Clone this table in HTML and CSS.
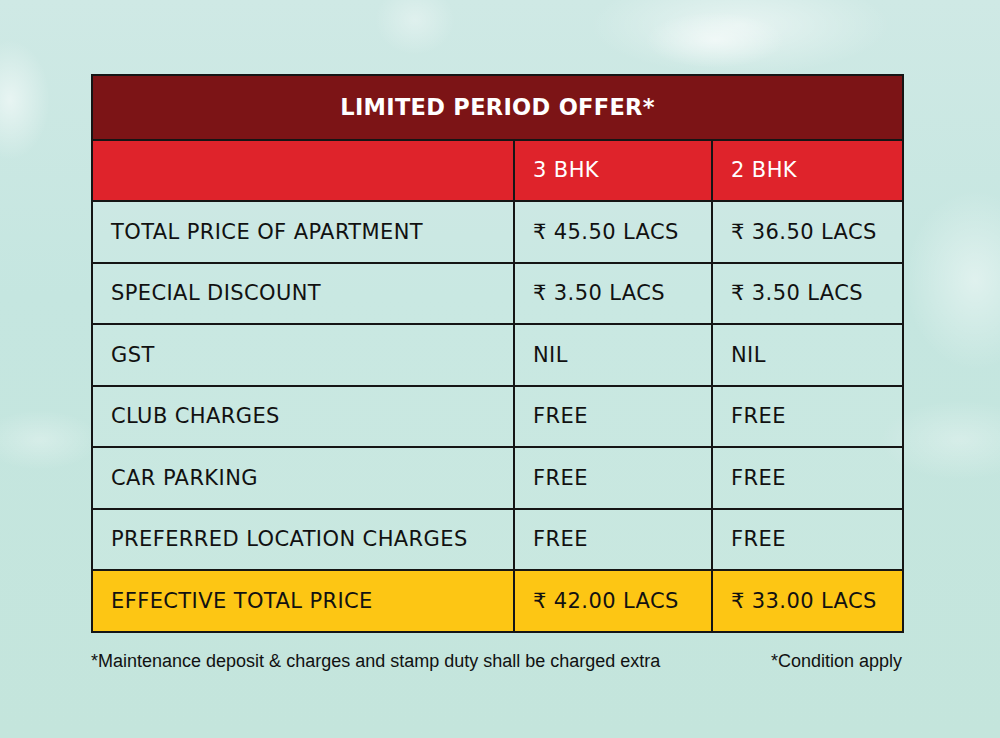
FILE: index.html
```html
<!DOCTYPE html>
<html>
<head>
<meta charset="utf-8">
<link rel="stylesheet" href="styles.css">
</head>
<body>
<div class="page">
  <table class="offer">
    <colgroup>
      <col class="c1"><col class="c2"><col class="c3">
    </colgroup>
    <tr class="title-row"><th colspan="3">LIMITED PERIOD OFFER*</th></tr>
    <tr class="head-row"><td></td><td>3 BHK</td><td>2 BHK</td></tr>
    <tr><td>TOTAL PRICE OF APARTMENT</td><td>₹ 45.50 LACS</td><td>₹ 36.50 LACS</td></tr>
    <tr><td>SPECIAL DISCOUNT</td><td>₹ 3.50 LACS</td><td>₹ 3.50 LACS</td></tr>
    <tr><td>GST</td><td>NIL</td><td>NIL</td></tr>
    <tr><td>CLUB CHARGES</td><td>FREE</td><td>FREE</td></tr>
    <tr><td>CAR PARKING</td><td>FREE</td><td>FREE</td></tr>
    <tr><td>PREFERRED LOCATION CHARGES</td><td>FREE</td><td>FREE</td></tr>
    <tr class="total-row"><td>EFFECTIVE TOTAL PRICE</td><td>₹ 42.00 LACS</td><td>₹ 33.00 LACS</td></tr>
  </table>
  <div class="notes">
    <span>*Maintenance deposit &amp; charges and stamp duty shall be charged extra</span>
    <span>*Condition apply</span>
  </div>
</div>
</body>
</html>
```

FILE: styles.css
```css
html, body {
  margin: 0;
  padding: 0;
}
body {
  width: 1000px;
  height: 738px;
  overflow: hidden;
  font-family: "DejaVu Sans", sans-serif;
  color: #111;
  background:
    radial-gradient(ellipse 70px 28px at 715px 40px, rgba(255,255,255,0.55), rgba(255,255,255,0) 100%),
    radial-gradient(ellipse 150px 50px at 740px 25px, rgba(255,255,255,0.5), rgba(255,255,255,0) 100%),
    radial-gradient(ellipse 40px 35px at 415px 20px, rgba(255,255,255,0.35), rgba(255,255,255,0) 100%),
    radial-gradient(ellipse 40px 60px at 10px 100px, rgba(255,255,255,0.55), rgba(255,255,255,0) 100%),
    radial-gradient(ellipse 70px 90px at 975px 280px, rgba(255,255,255,0.45), rgba(255,255,255,0) 100%),
    radial-gradient(ellipse 60px 30px at 40px 440px, rgba(255,255,255,0.3), rgba(255,255,255,0) 100%),
    radial-gradient(ellipse 80px 40px at 960px 440px, rgba(255,255,255,0.3), rgba(255,255,255,0) 100%),
    linear-gradient(180deg, #cfe9e5 0%, #c5e6e0 40%, #c4e5dc 100%);
}
.page {
  padding: 74px 0 0 91px;
}
.offer {
  border-collapse: collapse;
  width: 811px;
  table-layout: fixed;
  border: 2px solid #151515;
}
.c1 { width: 422px; }
.c2 { width: 198px; }
.c3 { width: 191px; }
.offer td, .offer th {
  border: 2px solid #151515;
  padding: 0 0 0 18px;
  height: 59.5px;
  font-size: 21px;
  letter-spacing: 0.4px;
  font-weight: normal;
  text-align: left;
  white-space: nowrap;
  background: rgba(255,255,255,0.08);
}
.offer td + td {
  padding-left: 18px;
}
.title-row th {
  background: #7c1416;
  color: #fff;
  text-align: center;
  font-weight: bold;
  font-size: 22.5px;
  letter-spacing: 0.3px;
  height: 62.5px;
  padding: 0;
}
.head-row td {
  background: #df232b;
  color: #fff;
}
.total-row td {
  background: #fdc614;
}
.notes {
  width: 811px;
  display: flex;
  justify-content: space-between;
  margin-top: 18px;
  font-family: "Liberation Sans", sans-serif;
  font-size: 18px;
  color: #111;
}
```
